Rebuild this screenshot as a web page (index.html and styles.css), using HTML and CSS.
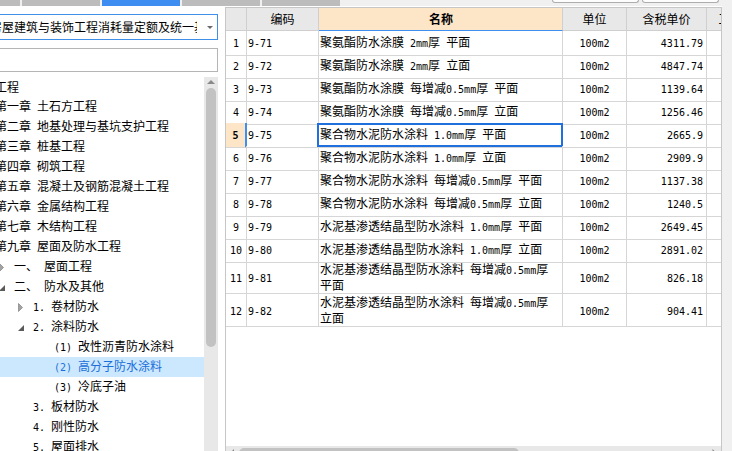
FILE: index.html
```html
<!DOCTYPE html>
<html lang="zh-CN">
<head>
<meta charset="utf-8">
<title>定额库</title>
<link rel="stylesheet" href="styles.css">
</head>
<body>
<div class="app">
  <header class="topbar">
    <nav class="tabs">
      <span class="tab tab-first"></span><span class="tab"></span><span class="tab tab-active"></span><span class="tab"></span><span class="tab"></span>
    </nav>
    <div class="tool-btns"><span class="tool-btn tool-btn-wide"></span><span class="tool-btn"></span></div>
  </header>
  <main class="main">
    <aside class="side">
      <div class="combo">
        <div class="combo-text"><span class="combo-label">房屋建筑与装饰工程消耗量定额及统一基价表</span></div>
        <svg class="combo-arrow" width="20" height="24" viewBox="0 0 20 24"><path d="M10 11 L16 11 L13 14 Z" fill="#6a6a6a"/></svg>
      </div>
      <div class="search"></div>
      <div class="tree-box">
        <div class="tree">
          <div class="tree-inner">
            <div class="node l0"><span class="tw"></span><span>建筑工程</span></div>
            <div class="node l1"><span class="tw"></span><span>第一章<span class="m"> </span>土石方工程</span></div>
            <div class="node l1"><span class="tw"></span><span>第二章<span class="m"> </span>地基处理与基坑支护工程</span></div>
            <div class="node l1"><span class="tw"></span><span>第三章<span class="m"> </span>桩基工程</span></div>
            <div class="node l1"><span class="tw"></span><span>第四章<span class="m"> </span>砌筑工程</span></div>
            <div class="node l1"><span class="tw"></span><span>第五章<span class="m"> </span>混凝土及钢筋混凝土工程</span></div>
            <div class="node l1"><span class="tw"></span><span>第六章<span class="m"> </span>金属结构工程</span></div>
            <div class="node l1"><span class="tw"></span><span>第七章<span class="m"> </span>木结构工程</span></div>
            <div class="node l1"><span class="tw"></span><span>第九章<span class="m"> </span>屋面及防水工程</span></div>
            <div class="node l2"><svg class="tw" width="16" height="20" viewBox="0 0 16 20"><path d="M1.5 6.5 L5.5 10.5 L1.5 14.5 Z" fill="#a3a3a3" stroke="#8a8a8a" stroke-width="0.8"/></svg><span>一、<span class="m"> </span>屋面工程</span></div>
            <div class="node l2"><svg class="tw" width="16" height="20" viewBox="0 0 16 20"><path d="M7 8 L7 14 L1 14 Z" fill="#5a5a5a"/></svg><span>二、<span class="m"> </span>防水及其他</span></div>
            <div class="node l3"><svg class="tw" width="16" height="20" viewBox="0 0 16 20"><path d="M1.5 6.5 L5.5 10.5 L1.5 14.5 Z" fill="#a3a3a3" stroke="#8a8a8a" stroke-width="0.8"/></svg><span><span class="m">1. </span>卷材防水</span></div>
            <div class="node l3"><svg class="tw" width="16" height="20" viewBox="0 0 16 20"><path d="M7 8 L7 14 L1 14 Z" fill="#5a5a5a"/></svg><span><span class="m">2. </span>涂料防水</span></div>
            <div class="node l4"><span class="tw"></span><span><span class="m">(1) </span>改性沥青防水涂料</span></div>
            <div class="node l4 sel"><span class="tw"></span><span><span class="m">(2) </span>高分子防水涂料</span></div>
            <div class="node l4"><span class="tw"></span><span><span class="m">(3) </span>冷底子油</span></div>
            <div class="node l3"><span class="tw"></span><span><span class="m">3. </span>板材防水</span></div>
            <div class="node l3"><span class="tw"></span><span><span class="m">4. </span>刚性防水</span></div>
            <div class="node l3"><span class="tw"></span><span><span class="m">5. </span>屋面排水</span></div>
          </div>
        </div>
        <div class="vscroll">
          <svg width="14" height="5" viewBox="0 0 14 5"><path d="M3 4 L7 0 L11 4 Z" fill="#8a8a8a"/></svg>
          <div class="vthumb"></div>
        </div>
      </div>
    </aside>

    <section class="panel">
      <div class="grid">
        <div class="grid-row head">
          <div class="c c-rn"></div><div class="c">编码</div><div class="c c-name">名称</div><div class="c">单位</div><div class="c">含税单价</div><div class="c">工程量</div>
        </div>
        <div class="grid-row">
          <div class="c c-rn"><span class="m">1</span></div><div class="c c-code"><span class="m">9-71</span></div>
          <div class="c c-name">聚氨酯防水涂膜<span class="m"> 2mm</span>厚<span class="m"> </span>平面</div>
          <div class="c c-unit"><span class="m">100m2</span></div><div class="c c-price"><span class="m">4311.79</span></div><div class="c"></div>
        </div>
        <div class="grid-row">
          <div class="c c-rn"><span class="m">2</span></div><div class="c c-code"><span class="m">9-72</span></div>
          <div class="c c-name">聚氨酯防水涂膜<span class="m"> 2mm</span>厚<span class="m"> </span>立面</div>
          <div class="c c-unit"><span class="m">100m2</span></div><div class="c c-price"><span class="m">4847.74</span></div><div class="c"></div>
        </div>
        <div class="grid-row">
          <div class="c c-rn"><span class="m">3</span></div><div class="c c-code"><span class="m">9-73</span></div>
          <div class="c c-name">聚氨酯防水涂膜<span class="m"> </span>每增减<span class="m">0.5mm</span>厚<span class="m"> </span>平面</div>
          <div class="c c-unit"><span class="m">100m2</span></div><div class="c c-price"><span class="m">1139.64</span></div><div class="c"></div>
        </div>
        <div class="grid-row">
          <div class="c c-rn"><span class="m">4</span></div><div class="c c-code"><span class="m">9-74</span></div>
          <div class="c c-name">聚氨酯防水涂膜<span class="m"> </span>每增减<span class="m">0.5mm</span>厚<span class="m"> </span>立面</div>
          <div class="c c-unit"><span class="m">100m2</span></div><div class="c c-price"><span class="m">1256.46</span></div><div class="c"></div>
        </div>
        <div class="grid-row cur">
          <div class="c c-rn"><span class="m">5</span></div><div class="c c-code"><span class="m">9-75</span></div>
          <div class="c c-name">聚合物水泥防水涂料<span class="m"> 1.0mm</span>厚<span class="m"> </span>平面</div>
          <div class="c c-unit"><span class="m">100m2</span></div><div class="c c-price"><span class="m">2665.9</span></div><div class="c"></div>
        </div>
        <div class="grid-row">
          <div class="c c-rn"><span class="m">6</span></div><div class="c c-code"><span class="m">9-76</span></div>
          <div class="c c-name">聚合物水泥防水涂料<span class="m"> 1.0mm</span>厚<span class="m"> </span>立面</div>
          <div class="c c-unit"><span class="m">100m2</span></div><div class="c c-price"><span class="m">2909.9</span></div><div class="c"></div>
        </div>
        <div class="grid-row">
          <div class="c c-rn"><span class="m">7</span></div><div class="c c-code"><span class="m">9-77</span></div>
          <div class="c c-name">聚合物水泥防水涂料<span class="m"> </span>每增减<span class="m">0.5mm</span>厚<span class="m"> </span>平面</div>
          <div class="c c-unit"><span class="m">100m2</span></div><div class="c c-price"><span class="m">1137.38</span></div><div class="c"></div>
        </div>
        <div class="grid-row">
          <div class="c c-rn"><span class="m">8</span></div><div class="c c-code"><span class="m">9-78</span></div>
          <div class="c c-name">聚合物水泥防水涂料<span class="m"> </span>每增减<span class="m">0.5mm</span>厚<span class="m"> </span>立面</div>
          <div class="c c-unit"><span class="m">100m2</span></div><div class="c c-price"><span class="m">1240.5</span></div><div class="c"></div>
        </div>
        <div class="grid-row">
          <div class="c c-rn"><span class="m">9</span></div><div class="c c-code"><span class="m">9-79</span></div>
          <div class="c c-name">水泥基渗透结晶型防水涂料<span class="m"> 1.0mm</span>厚<span class="m"> </span>平面</div>
          <div class="c c-unit"><span class="m">100m2</span></div><div class="c c-price"><span class="m">2649.45</span></div><div class="c"></div>
        </div>
        <div class="grid-row">
          <div class="c c-rn"><span class="m">10</span></div><div class="c c-code"><span class="m">9-80</span></div>
          <div class="c c-name">水泥基渗透结晶型防水涂料<span class="m"> 1.0mm</span>厚<span class="m"> </span>立面</div>
          <div class="c c-unit"><span class="m">100m2</span></div><div class="c c-price"><span class="m">2891.02</span></div><div class="c"></div>
        </div>
        <div class="grid-row tall">
          <div class="c c-rn"><span class="m">11</span></div><div class="c c-code"><span class="m">9-81</span></div>
          <div class="c c-name">水泥基渗透结晶型防水涂料<span class="m"> </span>每增减<span class="m">0.5mm</span>厚<span class="m"> </span>平面</div>
          <div class="c c-unit"><span class="m">100m2</span></div><div class="c c-price"><span class="m">826.18</span></div><div class="c"></div>
        </div>
        <div class="grid-row tall">
          <div class="c c-rn"><span class="m">12</span></div><div class="c c-code"><span class="m">9-82</span></div>
          <div class="c c-name">水泥基渗透结晶型防水涂料<span class="m"> </span>每增减<span class="m">0.5mm</span>厚<span class="m"> </span>立面</div>
          <div class="c c-unit"><span class="m">100m2</span></div><div class="c c-price"><span class="m">904.41</span></div><div class="c"></div>
        </div>
      </div>
      <div class="hscroll">
        <svg class="hs-arrow" width="13" height="12" viewBox="0 0 13 12"><path d="M4.5 6.5 L8 3 L8 10 Z" fill="#8a8a8a"/></svg>
        <div class="hthumb"></div>
        <div class="hs-fill"></div>
        <svg class="hs-arrow" width="13" height="12" viewBox="0 0 13 12"><path d="M8 6.5 L4.5 3 L4.5 10 Z" fill="#8a8a8a"/></svg>
      </div>
    </section>
    <div class="edge"></div>
  </main>
</div>
</body>
</html>
```

FILE: styles.css
```css
* { box-sizing: border-box; }
html, body { margin: 0; padding: 0; }
body {
  width: 732px;
  height: 451px;
  overflow: hidden;
  background: #f0f0f0;
  font-family: "Noto Sans CJK SC", "Noto Sans", sans-serif;
  font-size: 12px;
  color: #000;
}
.m {
  font-family: "DejaVu Sans Mono", "Liberation Mono", monospace;
  font-size: 10px;
}

/* top strip */
.topbar { height: 6px; display: flex; background: #f0f0f0; }
.tabs { display: flex; gap: 2px; }
.tab { width: 78px; height: 6px; background: #bcbcbc; }
.tab-first { width: 20px; }
.tab-active { background: #3d8ef0; }
.tool-btns { display: flex; gap: 3px; margin-left: 212px; }
.tool-btn {
  width: 77px; height: 3px; background: #fdfdfd;
  border: 1px solid #adadad; border-top: none; border-radius: 0 0 3px 3px;
}
.tool-btn-wide { width: 87px; }

/* main area */
.main { display: flex; height: 445px; background: #fff; overflow: hidden; }

.side { width: 218px; flex: none; display: flex; flex-direction: column; padding-top: 8px; }
.combo {
  flex: none; height: 26px; width: 220px; margin-left: -2px;
  border: 1px solid #3d8fe8; background: #fff; display: flex;
}
.combo-text { width: 198px; overflow: hidden; white-space: nowrap; line-height: 24px; }
.combo-label { display: inline-block; margin-left: -9px; }
.combo-arrow { flex: none; }
.search {
  flex: none; height: 24px; width: 220px; margin: 8px 0 0 -2px;
  border: 1px solid #b5b5b5; background: #fff;
}
.tree-box { flex: 1; min-height: 0; display: flex; margin-top: 5px; }
.tree { flex: 1; overflow: hidden; }
.tree-inner { margin-left: -60px; width: calc(100% + 60px); }
.node { height: 20px; line-height: 20px; display: flex; align-items: center; white-space: nowrap; }
.node .tw { flex: none; width: 16px; height: 20px; display: block; }
.l0 { padding-left: 15px; }
.l1 { padding-left: 39px; }
.l2 { padding-left: 58px; }
.l3 { padding-left: 77px; }
.l4 { padding-left: 98px; }
.node.sel { background: #cce8ff; color: #1a6fd9; }

.vscroll { flex: none; width: 14px; background: #e8e8e8; padding-top: 3px; }
.vscroll svg { display: block; }
.vthumb { width: 10px; height: 259px; margin: 3px 0 0 2px; border-radius: 5px; background: #c2c2c2; }

/* grid panel */
.panel {
  flex: none; width: 497px; height: 456px;
  margin: 1px 0 0 7px;
  border: 1px solid #c6c6c6; border-bottom: none;
  display: flex; flex-direction: column; overflow: hidden; background: #fff;
}
.grid { flex: none; }
.grid-row { display: grid; grid-template-columns: 21px 72px 244px 64px 80px 60px; height: 23px; }
.grid-row.tall { height: 33px; }
.c {
  border-right: 1px solid #d6d6d6; border-bottom: 1px solid #d6d6d6;
  line-height: 22px; white-space: nowrap; overflow: hidden;
}
.c-rn { text-align: center; }
.c-code { padding-left: 1px; }
.c-name { padding-left: 1px; white-space: normal; position: relative; overflow: visible; }
.c-unit { text-align: center; }
.c-price { text-align: right; padding-right: 3px; }
.tall .c { line-height: 32px; }
.tall .c-name { line-height: 14px; padding-top: 1px; }

.head .c { background: #e8e8e8; text-align: center; border-color: #cfcfcf; white-space: nowrap; }
.head .c-name { background: #fde5c8; font-weight: bold; border-bottom-color: #3d8ff0; }

.cur .c-rn { background: #fde5c8; font-weight: bold; border-right: 2px solid #3d8ff0; }
.cur .c-name::after {
  content: ""; position: absolute; left: -2px; top: 0; right: -1px; bottom: 0;
  border: 2px solid #1f6fde;
}

.hscroll {
  margin-top: auto; flex: none; height: 17px; background: #e8e8e8;
  display: flex; align-items: flex-start;
}
.hs-arrow { flex: none; display: block; }
.hthumb { flex: none; width: 280px; height: 11px; margin-top: 2px; border-radius: 5px; background: #c2c2c2; }
.hs-fill { flex: 1; }

.edge { flex: 1; background: #f0f0f0; }
```
